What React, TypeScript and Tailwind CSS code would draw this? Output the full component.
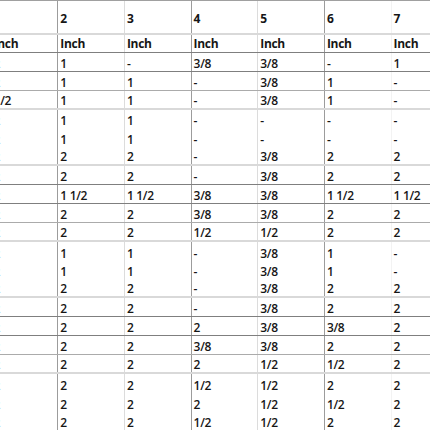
import React from "react";

type Row = { cells: string[]; border: string; head?: boolean; h: string; pb?: string };

const colBorder = [
  "border-r border-[#9c9c9c]",
  "border-r border-[#dcdcdc]",
  "border-r border-[#9c9c9c]",
  "border-r border-[#dcdcdc]",
  "border-r border-[#9c9c9c]",
  "border-r border-[#f3f3f3]",
  "border-r border-transparent",
];

const DARK = "border-b border-[#7f7f7f]";
const MED = "border-b border-[#ababab]";
const LIGHT = "border-b-2 border-[#d9d9d9]";
const NONE = "";

const data: [string[], string][] = [
  [["2", "1", "-", "3/8", "3/8", "-", "1"], DARK],
  [["2", "1", "1", "-", "3/8", "1", "-"], MED],
  [["1/2", "1", "1", "-", "3/8", "1", "-"], LIGHT],
  [["2", "1", "1", "-", "-", "-", "-"], NONE],
  [["2", "1", "1", "-", "-", "-", "-"], NONE],
  [["2", "2", "2", "-", "3/8", "2", "2"], LIGHT],
  [["2", "2", "2", "-", "3/8", "2", "2"], DARK],
  [["2", "1 1/2", "1 1/2", "3/8", "3/8", "1 1/2", "1 1/2"], DARK],
  [["2", "2", "2", "3/8", "3/8", "2", "2"], MED],
  [["2", "2", "2", "1/2", "1/2", "2", "2"], LIGHT],
  [["2", "1", "1", "-", "3/8", "1", "-"], NONE],
  [["2", "1", "1", "-", "3/8", "1", "-"], NONE],
  [["2", "2", "2", "-", "3/8", "2", "2"], LIGHT],
  [["2", "2", "2", "-", "3/8", "2", "2"], DARK],
  [["2", "2", "2", "2", "3/8", "3/8", "2"], DARK],
  [["2", "2", "2", "3/8", "3/8", "2", "2"], MED],
  [["2", "2", "2", "2", "1/2", "1/2", "2"], LIGHT],
  [["2", "2", "2", "1/2", "1/2", "2", "2"], NONE],
  [["2", "2", "2", "2", "1/2", "1/2", "2"], NONE],
  [["2", "2", "2", "1/2", "1/2", "2", "2"], NONE],
];

const rows: Row[] = [
  { cells: ["", "2", "3", "4", "5", "6", "7"], border: LIGHT, head: true, h: "h-[34px]", pb: "pb-[7px]" },
  { cells: ["Inch", "Inch", "Inch", "Inch", "Inch", "Inch", "Inch"], border: DARK, head: true, h: "h-[17.9px]", pb: "pb-[0.5px]" },
  ...data.map(([cells, border]) => ({ cells, border, h: "h-[18.88px]" })),
];

export default function App() {
  return (
    <div
      className="w-[430px] h-[430px] overflow-hidden bg-white text-[#161616]"
      style={{ fontFamily: '"Open Sans", "Noto Sans", sans-serif' }}
    >
      <div className="-ml-[8.4px] w-max border-t border-[#a0a0a0]">
        {rows.map((r, i) => (
          <div key={i} className={`flex ${r.h} ${r.border}`}>
            {r.cells.map((c, j) => (
              <div
                key={j}
                className={`w-[66.67px] shrink-0 h-full flex items-end pl-[2px] text-[12px] leading-[14px] tracking-[-0.3px] ${colBorder[j]} ${r.head ? "font-bold" : "font-semibold"} ${r.pb ?? ""}`}
              >
                {c}
              </div>
            ))}
          </div>
        ))}
      </div>
    </div>
  );
}
